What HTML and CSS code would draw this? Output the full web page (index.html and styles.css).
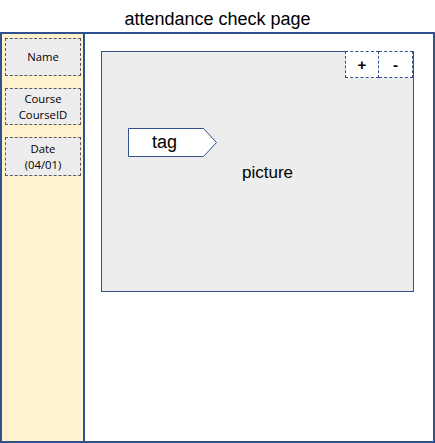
FILE: index.html
```html
<!DOCTYPE html>
<html>
<head>
<meta charset="utf-8">
<link rel="stylesheet" href="styles.css">
</head>
<body>
<div class="title">attendance check page</div>
<div class="frame">
  <aside class="sidebar">
    <div class="field field-name">Name</div>
    <div class="field field-course">Course<br>CourseID</div>
    <div class="field field-date">Date<br>(04/01)</div>
  </aside>
  <main class="main">
    <div class="picture">
      <span class="picture-label">picture</span>
      <div class="zoom">
        <div class="zoom-btn">+</div>
        <div class="zoom-btn">-</div>
      </div>
      <div class="tag">
        <svg class="tag-shape" width="92" height="30" viewBox="0 0 92 30">
          <polygon points="0.5,0.5 75.5,0.5 88.5,14.5 75.5,28.5 0.5,28.5" fill="#ffffff" stroke="#2f528f" stroke-width="1"/>
        </svg>
        <span class="tag-text">tag</span>
      </div>
    </div>
  </main>
</div>
</body>
</html>
```
FILE: styles.css
```css
html, body {
  margin: 0;
  padding: 0;
  background: #ffffff;
}
body {
  width: 435px;
  height: 443px;
  overflow: hidden;
  font-family: "Liberation Sans", Arial, sans-serif;
  color: #000;
}
.title {
  box-sizing: border-box;
  height: 32px;
  padding-top: 9px;
  line-height: 20px;
  font-size: 18px;
  text-align: center;
}
.frame {
  box-sizing: border-box;
  width: 435px;
  height: 411px;
  border: 2px solid #2f528f;
  display: flex;
}
.sidebar {
  box-sizing: border-box;
  width: 83px;
  flex: none;
  background: #fff2cc;
  border-right: 2px solid #2f528f;
  padding: 4px 0 0 3px;
  display: flex;
  flex-direction: column;
  gap: 12px;
}
.field {
  box-sizing: border-box;
  width: 76px;
  background: #ededed;
  border: 1px dashed #5a5a5a;
  font-family: "Open Sans", "Noto Sans", sans-serif;
  font-size: 11.3px;
  line-height: 15.5px;
  text-align: center;
  display: flex;
  align-items: center;
  justify-content: center;
}
.field-name { height: 38px; }
.field-course { height: 37px; }
.field-date { height: 39px; }
.main {
  flex: 1;
  padding: 17px 0 0 16px;
}
.picture {
  position: relative;
  box-sizing: border-box;
  width: 313px;
  height: 241px;
  background: #ededed;
  border: 1px solid #2f528f;
  display: flex;
  align-items: center;
  justify-content: center;
  padding-left: 20px;
}
.picture-label {
  font-size: 17px;
  line-height: 20px;
  margin-top: 2px;
}
.zoom {
  position: absolute;
  top: -1px;
  right: 0;
  display: flex;
  background: #ffffff;
}
.zoom-btn {
  box-sizing: border-box;
  width: 34px;
  height: 27px;
  border: 1px dashed #2f528f;
  display: flex;
  align-items: center;
  justify-content: center;
  font-size: 15px;
  font-weight: bold;
}
.zoom-btn + .zoom-btn {
  border-left: none;
}
.tag {
  position: absolute;
  left: 26px;
  top: 76px;
  width: 92px;
  height: 30px;
}
.tag-shape {
  display: block;
}
.tag-text {
  position: absolute;
  left: 0;
  top: 0;
  width: 73px;
  height: 29px;
  line-height: 29px;
  text-align: center;
  font-size: 18px;
}
```
